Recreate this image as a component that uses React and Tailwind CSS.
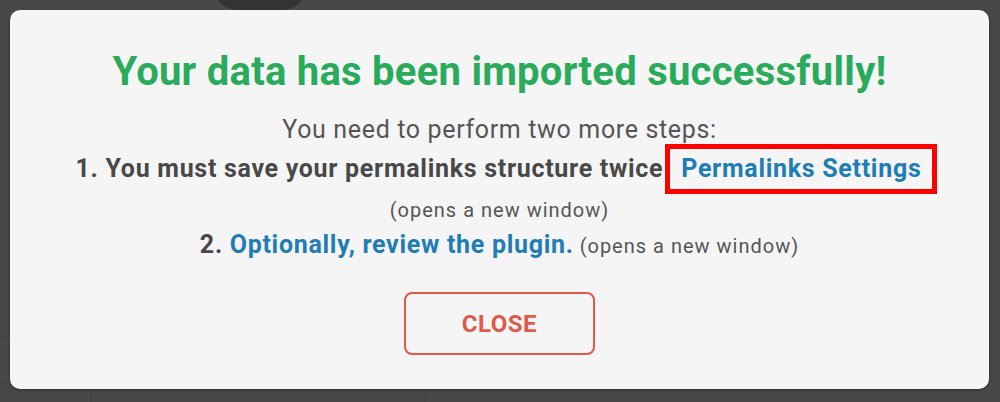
export default function App() {
  return (
    <div className="relative h-[402px] w-[1000px] overflow-hidden bg-[#484848] font-['Roboto',sans-serif]">
      {/* backdrop bits peeking out behind the modal */}
      <div className="absolute left-[213px] top-[-40px] h-[50px] w-[94px] rounded-full bg-[#333333]" />
      <div className="absolute left-[90px] top-[380px] h-[30px] w-px bg-[#2f4a30]" />
      <div className="absolute left-[425px] top-[380px] h-[30px] w-px bg-[#2f4a30]" />
      <div className="absolute left-0 top-[342px] h-px w-[12px] bg-[#3c5a3d]" />
      <div className="absolute left-0 top-[376px] h-px w-[12px] bg-[#3c5a3d]" />

      <div className="absolute left-[10px] top-[10px] flex h-[379px] w-[979px] flex-col items-center rounded-[10px] bg-[#f5f5f5] pt-[38px] shadow-[0_1px_3px_rgba(0,0,0,0.4)]">
        <h1 className="text-[40px] font-bold leading-[48px] tracking-[0.25px] text-[#2aab5c]">
          Your data has been imported successfully!
        </h1>
        <p className="mt-[19px] text-[25px] leading-[30px] tracking-[0.65px] text-[#555555]">
          You need to perform two more steps:
        </p>
        <div className="-mt-[1px] flex items-center pl-[14px] text-[25px] font-bold leading-[30px] tracking-[0.7px] text-[#484848]">
          <span>1. You must save your permalinks structure twice</span>
          <span className="ml-[2px] border-[5px] border-[#ff0000] px-[11px] py-[5px] text-[#1f7db5]">
            Permalinks Settings
          </span>
        </div>
        <p className="mt-[1px] text-[20px] leading-[30px] tracking-[1px] text-[#555555]">(opens a new window)</p>
        <p className="mt-[5px] text-[25px] leading-[30px] tracking-[0.7px] text-[#484848]">
          <span className="font-bold">2. </span>
          <span className="font-bold text-[#1f7db5]">Optionally, review the plugin.</span>
          <span className="text-[20px] tracking-[1px] text-[#555555]"> (opens a new window)</span>
        </p>
        <button className="mt-[31px] h-[63px] w-[191px] rounded-[8px] border-2 border-[#e05a4b] text-[24px] font-bold tracking-[0.5px] text-[#e05a4b]">
          CLOSE
        </button>
      </div>
    </div>
  );
}
